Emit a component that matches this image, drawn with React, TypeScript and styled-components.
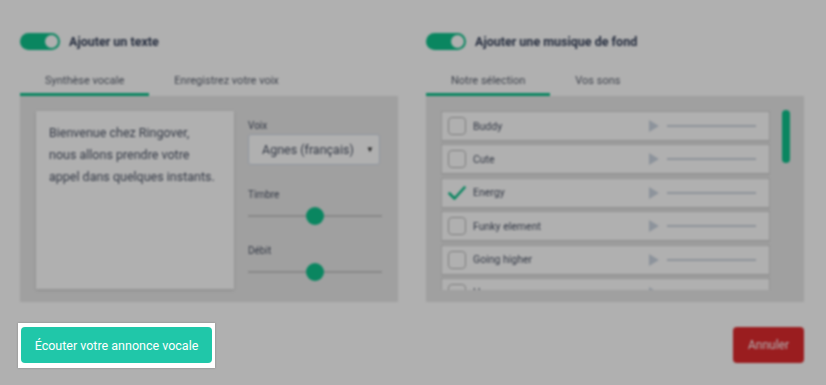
import styled, { createGlobalStyle } from 'styled-components'

const GlobalStyle = createGlobalStyle`
  html, body {
    margin: 0;
    background: #ffffff;
    font-family: Roboto, "Liberation Sans", sans-serif;
  }
`

const green = '#0fc28c'

const tracks = [
  { name: 'Buddy', checked: false },
  { name: 'Cute', checked: false },
  { name: 'Energy', checked: true },
  { name: 'Funky element', checked: false },
  { name: 'Going higher', checked: false },
  { name: 'Happy', checked: false },
]

export default function App() {
  return (
    <>
      <GlobalStyle />
      <Page>
        <Columns>
          <Column>
            <Header>
              <Toggle />
              <Title>Ajouter un texte</Title>
            </Header>
            <Tabs>
              <Tab $active>Synthèse vocale</Tab>
              <Tab>Enregistrez votre voix</Tab>
            </Tabs>
            <Panel>
              <TextBox>
                Bienvenue chez Ringover,
                <br />
                nous allons prendre votre
                <br />
                appel dans quelques instants.
              </TextBox>
              <Controls>
                <Label>Voix</Label>
                <Select>
                  <span>Agnes (français)</span>
                  <Caret>▼</Caret>
                </Select>
                <Label $top={24}>Timbre</Label>
                <Slider $value={0.5} />
                <Label $top={20}>Débit</Label>
                <Slider $value={0.5} />
              </Controls>
            </Panel>
          </Column>

          <Column>
            <Header>
              <Toggle />
              <Title>Ajouter une musique de fond</Title>
            </Header>
            <Tabs>
              <Tab $active>Notre sélection</Tab>
              <Tab>Vos sons</Tab>
            </Tabs>
            <MusicPanel>
              <List>
                {tracks.map((t) => (
                  <Track key={t.name}>
                    {t.checked ? (
                      <Check viewBox="0 0 18 18">
                        <path d="M1.5 9.5 L6.5 14.5 L16.5 3.5" />
                      </Check>
                    ) : (
                      <Box />
                    )}
                    <TrackName>{t.name}</TrackName>
                    <Play />
                    <Progress />
                  </Track>
                ))}
              </List>
              <Scroll>
                <ScrollThumb />
              </Scroll>
            </MusicPanel>
          </Column>
        </Columns>

        <Footer>
          <Spotlight>
            <ListenButton>Écouter votre annonce vocale</ListenButton>
          </Spotlight>
          <CancelButton>Annuler</CancelButton>
        </Footer>
        <Overlay />
      </Page>
    </>
  )
}

const Page = styled.div`
  width: 826px;
  height: 385px;
  padding: 33px 22px 0 20px;
  box-sizing: border-box;
  overflow: hidden;
`

const Columns = styled.div`
  display: grid;
  grid-template-columns: 378px 378px;
  column-gap: 28px;
  filter: blur(1.3px);
`

const Column = styled.div`
  display: flex;
  flex-direction: column;
`

const Header = styled.div`
  display: flex;
  align-items: center;
  gap: 9px;
  height: 17px;
`

const Toggle = styled.div`
  position: relative;
  width: 40px;
  height: 17px;
  border-radius: 9px;
  background: ${green};
  &::after {
    content: '';
    position: absolute;
    right: 2px;
    top: 2px;
    width: 13px;
    height: 13px;
    border-radius: 50%;
    background: #fff;
  }
`

const Title = styled.span`
  font-size: 12.5px;
  font-weight: 700;
  color: #35405a;
`

const Tabs = styled.div`
  display: flex;
  margin-top: 12px;
`

const Tab = styled.div<{ $active?: boolean }>`
  height: 34px;
  box-sizing: border-box;
  padding: 6px 25px 0;
  display: flex;
  align-items: center;
  font-size: 11px;
  color: #5c6270;
  border-bottom: 3px solid ${(p) => (p.$active ? green : 'transparent')};
`

const Panel = styled.div`
  display: flex;
  gap: 14px;
  height: 206px;
  box-sizing: border-box;
  padding: 15px 16px 13px;
  background: #e8e8e8;
`

const TextBox = styled.div`
  width: 198px;
  flex-shrink: 0;
  box-sizing: border-box;
  padding: 11px 13px;
  background: #fff;
  box-shadow: 0 1px 3px rgba(0, 0, 0, 0.15);
  font-size: 12.5px;
  line-height: 22px;
  color: #4c5466;
`

const Controls = styled.div`
  flex: 1;
  display: flex;
  flex-direction: column;
  padding-top: 9px;
`

const Label = styled.div<{ $top?: number }>`
  font-size: 10px;
  color: #4c5466;
  margin-top: ${(p) => p.$top ?? 0}px;
`

const Select = styled.div`
  margin-top: 3px;
  width: 132px;
  height: 31px;
  box-sizing: border-box;
  border: 1px solid #cfd8e6;
  border-radius: 3px;
  background: #fff;
  display: flex;
  align-items: center;
  justify-content: space-between;
  padding: 0 5px 0 13px;
  font-size: 12.5px;
  color: #4c5466;
`

const Caret = styled.span`
  font-size: 8px;
  color: #333;
`

const Slider = styled.div<{ $value: number }>`
  position: relative;
  margin-top: 7px;
  height: 18px;
  &::before {
    content: '';
    position: absolute;
    left: 0;
    right: 0;
    top: 8px;
    height: 2px;
    background: #c6c6c6;
  }
  &::after {
    content: '';
    position: absolute;
    top: 0;
    left: calc(${(p) => p.$value * 100}% - 9px);
    width: 18px;
    height: 18px;
    border-radius: 50%;
    background: ${green};
  }
`

const MusicPanel = styled(Panel)`
  gap: 12px;
  padding: 15px 14px 12px 15px;
`

const List = styled.div`
  flex: 1;
  display: flex;
  flex-direction: column;
  gap: 3.4px;
  overflow: hidden;
`

const Track = styled.div`
  flex-shrink: 0;
  height: 30px;
  box-sizing: border-box;
  display: flex;
  align-items: center;
  padding: 0 13px 0 6px;
  background: #fff;
  border: 1px solid #d4d4d4;
  box-shadow: 0 1px 2px rgba(0, 0, 0, 0.08);
`

const Box = styled.div`
  width: 18px;
  height: 18px;
  box-sizing: border-box;
  border: 1px solid #b8b8b8;
  border-radius: 4px;
`

const Check = styled.svg`
  width: 18px;
  height: 18px;
  fill: none;
  stroke: ${green};
  stroke-width: 2.6;
  stroke-linecap: round;
  stroke-linejoin: round;
`

const TrackName = styled.span`
  flex: 1;
  margin-left: 7px;
  font-size: 10.5px;
  color: #4c5466;
`

const Play = styled.div`
  width: 0;
  height: 0;
  border-top: 6px solid transparent;
  border-bottom: 6px solid transparent;
  border-left: 10px solid #cdd6e2;
  margin-right: 8px;
`

const Progress = styled.div`
  width: 89px;
  height: 2px;
  background: #cdd4de;
`

const Scroll = styled.div`
  width: 8px;
`

const ScrollThumb = styled.div`
  width: 8px;
  height: 53px;
  margin-top: -1px;
  border-radius: 4px;
  background: ${green};
`

const Footer = styled.div`
  display: flex;
  justify-content: space-between;
  align-items: flex-start;
  margin-top: 21px;
  margin-left: -2px;
`

const Spotlight = styled.div`
  position: relative;
  z-index: 2;
  padding: 4px 3px 5px 3px;
  background: #fff;
  box-shadow: 0 0 2px rgba(0, 0, 0, 0.25);
`

const ListenButton = styled.button`
  width: 191px;
  height: 36px;
  border: none;
  border-radius: 4px;
  background: #20c7a9;
  color: #fff;
  font-family: Roboto, "Liberation Sans", sans-serif;
  font-size: 12.5px;
  padding: 0;
`

const CancelButton = styled.button`
  margin-top: 4px;
  width: 71px;
  height: 36px;
  border: none;
  border-radius: 4px;
  background: #e02a2e;
  color: #fff;
  font-family: Roboto, "Liberation Sans", sans-serif;
  font-size: 12px;
  padding: 0;
  filter: blur(1.3px);
`

const Overlay = styled.div`
  position: fixed;
  inset: 0;
  z-index: 1;
  background: rgba(0, 0, 0, 0.31);
`
